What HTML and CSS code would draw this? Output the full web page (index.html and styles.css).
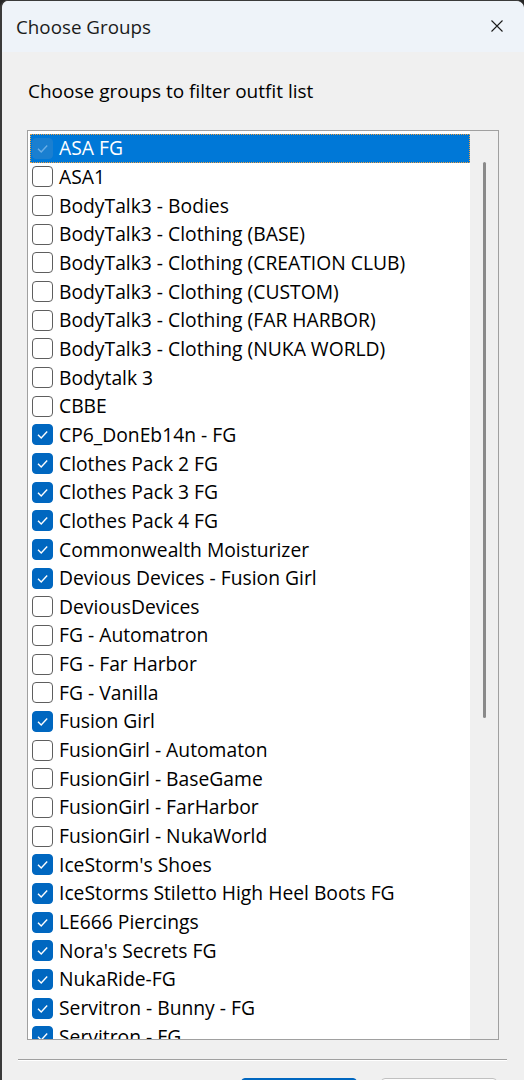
FILE: index.html
```html
<!DOCTYPE html>
<html lang="en">
<head>
  <meta charset="UTF-8" />
  <title>Choose Groups</title>
  <link rel="stylesheet" href="styles.css">
</head>
<body>
  <div class="window">
    <div class="title-bar">
      <span class="title">Choose Groups</span>
      <svg class="close" width="12" height="12" viewBox="0 0 12 12">
        <path d="M0.5 0.5 L11.5 11.5 M11.5 0.5 L0.5 11.5" stroke="#1b1b1b" stroke-width="1.1" fill="none"/>
      </svg>
    </div>

    <div class="content">
      <div class="label">Choose groups to filter outfit list</div>

      <div class="listbox">
        <div class="items" id="items"></div>
        <div class="scrollbar"><div class="thumb"></div></div>
      </div>

      <div class="separator"></div>

      <!-- botoes OK / Cancelar: so a borda de cima aparece -->
      <div class="buttons">
        <button class="button primary" aria-label="OK"></button>
        <button class="button" aria-label="Cancel"></button>
      </div>
    </div>
  </div>

  <script>
    // lista de grupos: [nome, marcado]
    const groups = [
      ['ASA FG', true],
      ['ASA1', false],
      ['BodyTalk3 - Bodies', false],
      ['BodyTalk3 - Clothing (BASE)', false],
      ['BodyTalk3 - Clothing (CREATION CLUB)', false],
      ['BodyTalk3 - Clothing (CUSTOM)', false],
      ['BodyTalk3 - Clothing (FAR HARBOR)', false],
      ['BodyTalk3 - Clothing (NUKA WORLD)', false],
      ['Bodytalk 3', false],
      ['CBBE', false],
      ['CP6_DonEb14n - FG', true],
      ['Clothes Pack 2 FG', true],
      ['Clothes Pack 3 FG', true],
      ['Clothes Pack 4 FG', true],
      ['Commonwealth Moisturizer', true],
      ['Devious Devices - Fusion Girl', true],
      ['DeviousDevices', false],
      ['FG - Automatron', false],
      ['FG - Far Harbor', false],
      ['FG - Vanilla', false],
      ['Fusion Girl', true],
      ['FusionGirl - Automaton', false],
      ['FusionGirl - BaseGame', false],
      ['FusionGirl - FarHarbor', false],
      ['FusionGirl - NukaWorld', false],
      ["IceStorm's Shoes", true],
      ['IceStorms Stiletto High Heel Boots FG', true],
      ['LE666 Piercings', true],
      ["Nora's Secrets FG", true],
      ['NukaRide-FG', true],
      ['Servitron - Bunny - FG', true],
      ['Servitron - FG', true]
    ];

    const check = '<svg width="21" height="21" viewBox="0 0 21 21"><path d="M6 10.8 L9.2 14 L15.2 7.6" stroke="currentColor" stroke-width="1.4" fill="none"/></svg>';
    const list = document.getElementById('items');

    groups.forEach(function (g, i) {
      const row = document.createElement('div');
      row.className = 'row' + (i === 0 ? ' selected' : '');
      const box = document.createElement('span');
      box.className = 'checkbox' + (g[1] ? ' checked' : '');
      if (g[1]) box.innerHTML = check;
      const text = document.createElement('span');
      text.className = 'name';
      text.textContent = g[0];
      row.appendChild(box);
      row.appendChild(text);
      list.appendChild(row);
    });
  </script>
</body>
</html>
```

FILE: styles.css
```css
body {
  margin: 0;
  padding: 0;
  width: 524px;
  height: 1080px;
  overflow: hidden;
  background-color: #262626;
  font-family: 'Open Sans', 'Noto Sans', sans-serif;
  font-size: 19px;
  color: #000;
}

.window {
  height: 1079px;
  border-top: 1px solid #3a3a3a;
  border-left: 2px solid #3a3a3a;
  border-radius: 8px 8px 0 0;
  overflow: hidden;
  background-color: #f0f0f0;
}

.title-bar {
  height: 51px;
  display: flex;
  align-items: center;
  justify-content: space-between;
  padding: 0 21px 0 14px;
  background-color: #eef3f9;
}

.title {
  font-size: 18.8px;
  color: #1b1b1b;
}

.close {
  margin-top: -2px;
}

.content {
  padding: 27px 0 0 0;
}

.label {
  margin-left: 26px;
  height: 24px;
  line-height: 24px;
}

.listbox {
  display: flex;
  margin: 27px 0 0 25px;
  width: 470px;
  height: 908px;
  border: 1px solid #a0a0a0;
  background-color: #fff;
  overflow: hidden;
}

.items {
  flex: 1;
  padding: 3px 0 0 2px;
  overflow: hidden;
}

.row {
  display: flex;
  align-items: center;
  height: 28.67px;
  padding-left: 2px;
  box-sizing: border-box;
  white-space: nowrap;
  font-size: 19.3px;
}

.row.selected {
  background-color: #0078d7;
  color: #fff;
  outline: 1px dotted #f0a040;
  outline-offset: -1px;
}

.checkbox {
  width: 21px;
  height: 21px;
  box-sizing: border-box;
  border: 1.5px solid #5f5f5f;
  border-radius: 4px;
  background-color: #fff;
  margin-right: 6px;
  flex-shrink: 0;
  color: #fff;
  display: flex;
  align-items: center;
  justify-content: center;
}

.checkbox svg {
  display: block;
  margin: -1.5px;
}

.checkbox.checked {
  background-color: #0067c0;
  border-color: #0067c0;
}

.row.selected .checkbox {
  background-color: #1a7fd0;
  border-color: #1a7fd0;
  color: #6aaee6;
}

.name {
  line-height: 28px;
}

.scrollbar {
  width: 28px;
  background-color: #f0f0f0;
  padding: 31px 0 0 13px;
  box-sizing: border-box;
}

.thumb {
  width: 3px;
  height: 556px;
  border-radius: 2px;
  background-color: #8a8a8a;
}

.separator {
  margin: 19px 0 0 16px;
  width: 489px;
  height: 1px;
  background-color: #a0a0a0;
  border-bottom: 1px solid #fff;
}

.buttons {
  display: flex;
  gap: 24px;
  margin: 17px 0 0 239px;
}

.button {
  width: 116px;
  height: 36px;
  border: 1px solid #c0c0c0;
  border-radius: 4px;
  background-color: #fdfdfd;
}

.button.primary {
  background-color: #0067c0;
  border-color: #0067c0;
}
```
